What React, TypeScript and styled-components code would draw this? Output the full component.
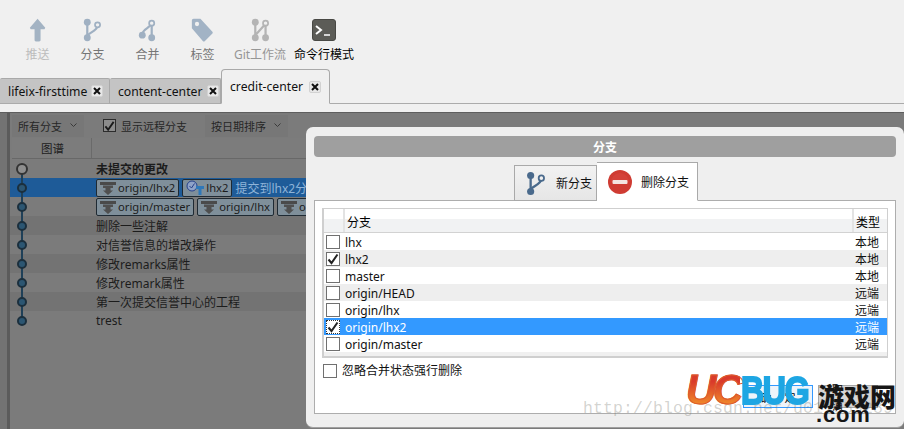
import React from "react";
import styled, { createGlobalStyle } from "styled-components";

const FONT = `"Noto Sans", "Noto Sans CJK SC", sans-serif`;

const GlobalStyle = createGlobalStyle`
  html, body {
    margin: 0;
    padding: 0;
    background: #f0f0f0;
    font-family: ${FONT};
    font-size: 12px;
    color: #000;
  }
`;

const Page = styled.div`
  position: relative;
  width: 904px;
  height: 429px;
  overflow: hidden;
  display: flex;
  flex-direction: column;
`;

const Toolbar = styled.div`
  height: 69px;
  flex: none;
  display: flex;
  padding-left: 10px;
`;

const ToolItem = styled.div<{ $width: number; $color: string }>`
  width: ${(p) => p.$width}px;
  display: flex;
  flex-direction: column;
  align-items: center;
  padding-top: 18px;
  color: ${(p) => p.$color};
  line-height: 16px;
  white-space: nowrap;
  svg {
    width: auto;
    height: 24px;
    margin-bottom: 5px;
  }
`;

const TabBar = styled.div`
  height: 35px;
  flex: none;
  display: flex;
  align-items: flex-end;
  border-bottom: 1px solid #ababab;
  box-sizing: border-box;
`;

const DocTab = styled.div<{ $active?: boolean; $width: number; $right: number }>`
  width: ${(p) => p.$width}px;
  box-sizing: border-box;
  height: ${(p) => (p.$active ? 35 : 26)}px;
  margin-bottom: -1px;
  display: flex;
  align-items: center;
  justify-content: space-between;
  padding: 0 ${(p) => p.$right}px 0 8px;
  background: ${(p) => (p.$active ? "#f0f0f0" : "#c4c4c4")};
  border: 1px solid #a9a9a9;
  border-bottom: ${(p) => (p.$active ? "1px solid #f0f0f0" : "1px solid #ababab")};
  border-left-width: ${(p) => (p.$active ? 1 : 0)}px;
  border-radius: ${(p) => (p.$active ? "4px 4px 0 0" : "2px 2px 0 0")};
  font-size: 12.2px;
  white-space: nowrap;
  color: #111;
`;

const CloseBox = styled.span`
  width: 12px;
  height: 12px;
  flex: none;
  display: flex;
  align-items: center;
  justify-content: center;
  background: #e8e8e8;
  border: 1px solid #d2d2d2;
  border-radius: 2px;
  box-sizing: border-box;
`;

const Workspace = styled.div`
  margin-top: 8px;
  flex: 1;
  display: flex;
  background: #7b7b7b;
  border-top: 1px solid #5e5e5e;
  min-height: 0;
`;

const Gutter = styled.div`
  width: 7px;
  flex: none;
  background: #737373;
  border-right: 3px solid #5b5b5b;
`;

const LogPane = styled.div`
  flex: 1;
  display: flex;
  flex-direction: column;
  color: #1c1c1c;
`;

const FilterBar = styled.div`
  height: 25px;
  flex: none;
  display: flex;
  align-items: center;
  color: #262626;
  padding-left: 2px;
`;

const FilterDrop = styled.div<{ $width: number }>`
  width: ${(p) => p.$width}px;
  height: 22px;
  box-sizing: border-box;
  padding: 0 7px 0 6px;
  display: flex;
  align-items: center;
  justify-content: space-between;
  background: #777;
  font-size: 11px;
  svg {
    margin-top: -1px;
  }
`;

const FilterCheck = styled.div`
  display: flex;
  align-items: center;
  gap: 5px;
  margin: 0 18px 0 19px;
  font-size: 11px;
`;

const DimBox = styled.span`
  width: 13px;
  height: 13px;
  box-sizing: border-box;
  border: 1px solid #2c2c2c;
  background: #8c8c8c;
  display: flex;
  align-items: center;
  justify-content: center;
`;

const GraphHeader = styled.div`
  height: 21px;
  flex: none;
  display: flex;
  align-items: center;
  background: #7c7c7c;
  border-bottom: 1px solid #686868;
  box-sizing: border-box;
  margin-left: 2px;
`;

const GraphTitle = styled.div`
  width: 80px;
  height: 100%;
  display: flex;
  align-items: center;
  justify-content: center;
  padding-left: 2px;
  box-sizing: border-box;
  border-right: 1px solid #6a6a6a;
  font-size: 11.5px;
`;

const CommitList = styled.div`
  position: relative;
  display: flex;
  flex-direction: column;
`;

const CommitRow = styled.div<{ $selected?: boolean; $odd?: boolean }>`
  height: 19px;
  display: flex;
  align-items: center;
  white-space: nowrap;
  overflow: hidden;
  background: ${(p) => (p.$selected ? "#1e5b98" : p.$odd ? "#737373" : "#7b7b7b")};
  font-size: 12px;
`;

const NodeCell = styled.div`
  width: 86px;
  height: 100%;
  flex: none;
  position: relative;
  display: flex;
  align-items: center;
  padding-left: 7px;
  box-sizing: border-box;
`;

const Rail = styled.span<{ $first?: boolean; $last?: boolean }>`
  position: absolute;
  left: 11px;
  width: 2px;
  background: #1f4058;
  top: ${(p) => (p.$first ? "50%" : 0)};
  bottom: ${(p) => (p.$last ? "50%" : 0)};
`;

const Node = styled.span<{ $head?: boolean }>`
  position: relative;
  width: ${(p) => (p.$head ? 12 : 10)}px;
  height: ${(p) => (p.$head ? 12 : 10)}px;
  margin-left: ${(p) => (p.$head ? -1 : 0)}px;
  border-radius: 50%;
  box-sizing: border-box;
  background: ${(p) => (p.$head ? "#8e8e8e" : "#2c5672")};
  border: ${(p) => (p.$head ? "2.5px solid #333" : "2px solid #1b2f3d")};
`;

const Subject = styled.span<{ $bold?: boolean; $light?: boolean }>`
  font-weight: ${(p) => (p.$bold ? 700 : 400)};
  color: ${(p) => (p.$light ? "#8fb4d8" : "#1c1c1c")};
`;

const RefTag = styled.span`
  height: 18px;
  box-sizing: border-box;
  display: inline-flex;
  align-items: center;
  gap: 2px;
  margin-right: 3px;
  padding: 0 3px;
  background: #7f8f9a;
  border: 1px solid #1f2a33;
  border-radius: 2px;
  color: #1c1c1c;
  font-size: 11.2px;
  flex: none;
`;

const Modal = styled.div`
  position: absolute;
  left: 306px;
  top: 127px;
  right: 0;
  bottom: 1px;
  box-sizing: border-box;
  background: #efefef;
  border-radius: 7px;
  border-bottom: 1px solid #a0a0a0;
  padding: 9px 8px 13px 8px;
  display: flex;
  flex-direction: column;
`;

const ModalTitle = styled.div`
  height: 21px;
  flex: none;
  background: #9f9f9f;
  border-radius: 4px;
  color: #fff;
  font-weight: 700;
  font-size: 12px;
  display: flex;
  align-items: center;
  justify-content: center;
`;

const ModalTabs = styled.div`
  height: 38px;
  margin-top: 6px;
  margin-bottom: -1px;
  flex: none;
  display: flex;
  justify-content: center;
  align-items: flex-end;
  position: relative;
  z-index: 1;
  padding-left: 2px;
`;

const ModalTab = styled.div<{ $active?: boolean; $width: number }>`
  width: ${(p) => p.$width}px;
  height: ${(p) => (p.$active ? 39 : 36)}px;
  box-sizing: border-box;
  display: flex;
  align-items: center;
  gap: ${(p) => (p.$active ? 9 : 10)}px;
  padding-left: 11px;
  border: 1px solid #a9a9a9;
  border-left-width: ${(p) => (p.$active ? 0 : 1)}px;
  border-bottom: 1px solid ${(p) => (p.$active ? "#fff" : "#a9a9a9")};
  background: ${(p) => (p.$active ? "#fff" : "linear-gradient(#f2f2f2, #e6e6e6)")};
  color: #111;
`;

const Panel = styled.div`
  flex: 1;
  background: #fff;
  border: 1px solid #adadad;
  padding: 7px 7px 0 7px;
  display: flex;
  flex-direction: column;
  position: relative;
`;

const BranchTable = styled.div`
  border: 1px solid #cfcfcf;
  border-width: 1px 1px 2px 2px;
  background: #f0f0f0;
  padding-bottom: 4px;
`;

const TableHead = styled.div`
  display: grid;
  grid-template-columns: 19px 1fr 35px;
  height: 24px;
  background: linear-gradient(#fff 42%, #f1f2f3 42%);
  border-bottom: 1px solid #d2d2d2;
  box-sizing: border-box;
`;

const HeadCell = styled.div<{ $divider?: boolean }>`
  display: flex;
  align-items: center;
  padding-left: 2px;
  padding-top: 3px;
  border-left: ${(p) => (p.$divider ? "2px solid #e3e3e3" : "none")};
  font-size: 12px;
`;

const BranchRow = styled.div<{ $alt?: boolean; $selected?: boolean }>`
  display: grid;
  grid-template-columns: 20px 1fr 34px;
  height: 17px;
  align-items: center;
  background: ${(p) => (p.$selected ? "#3399ff" : p.$alt ? "#eeeeee" : "#ffffff")};
  color: ${(p) => (p.$selected ? "#ffffff" : "#111")};
  font-size: 12px;
`;

const TypeCell = styled.span`
  padding-left: 2px;
`;

const NameCell = styled.span`
  padding-left: 1px;
`;

const Check = styled.span<{ $focus?: boolean }>`
  width: 14px;
  height: 14px;
  box-sizing: border-box;
  margin-left: 2px;
  border: 1px solid ${(p) => (p.$focus ? "#fff" : "#707070")};
  outline: ${(p) => (p.$focus ? "1px dotted #333" : "none")};
  outline-offset: -1px;
  background: #fff;
  display: flex;
  align-items: center;
  justify-content: center;
`;

const ForceRow = styled.div`
  display: flex;
  align-items: center;
  gap: 5px;
  margin: 6px 0 0 -1px;
  line-height: 14px;
  color: #111;
`;

const ButtonRow = styled.div`
  display: flex;
  justify-content: flex-end;
  gap: 5px;
  margin: 7px 10px 0 0;
`;

const DialogButton = styled.div<{ $primary?: boolean; $width: number }>`
  width: ${(p) => p.$width}px;
  height: 23px;
  box-sizing: border-box;
  display: flex;
  align-items: center;
  justify-content: center;
  letter-spacing: 13px;
  padding-left: 13px;
  background: ${(p) => (p.$primary ? "#eef4fa" : "#d6d6d6")};
  border: 1px solid ${(p) => (p.$primary ? "#3399ff" : "#a8a8a8")};
  font-size: 11px;
`;

const Watermark = styled.div`
  position: absolute;
  left: 583px;
  top: 399px;
  font-family: "Liberation Mono", monospace;
  font-size: 16.5px;
  letter-spacing: 0.1px;
  color: rgba(120, 120, 110, 0.32);
  white-space: nowrap;
`;

const LogoBox = styled.div`
  position: absolute;
  left: 687px;
  top: 370px;
  width: 215px;
  height: 55px;
`;

const LogoUC = styled.span`
  position: absolute;
  left: -1px;
  top: -1px;
  font-family: "Liberation Sans", sans-serif;
  font-size: 42px;
  line-height: 42px;
  font-weight: 700;
  font-style: italic;
  letter-spacing: -3.5px;
  background: linear-gradient(#d93a2b 30%, #f08a2a 85%);
  -webkit-background-clip: text;
  background-clip: text;
  color: transparent;
  -webkit-text-stroke: 1px #dd5a2a;
`;

const LogoBug = styled.span`
  position: absolute;
  left: 54px;
  top: 1px;
  font-family: "Liberation Sans", sans-serif;
  font-size: 39px;
  line-height: 40px;
  font-weight: 700;
  letter-spacing: -1.5px;
  color: #1ea6e3;
  -webkit-text-stroke: 2px #1ea6e3;
  transform: scaleX(0.82);
  transform-origin: left center;
`;

const LogoCn = styled.span`
  position: absolute;
  left: 131px;
  top: 11px;
  font-family: "Noto Sans CJK SC", sans-serif;
  font-size: 26px;
  line-height: 30px;
  font-weight: 900;
  color: #161616;
`;

const LogoCom = styled.span`
  position: absolute;
  left: 129px;
  top: 33px;
  font-family: "Liberation Sans", sans-serif;
  font-size: 22px;
  line-height: 24px;
  font-weight: 700;
  letter-spacing: 0.8px;
  color: #161616;
`;

const BranchIcon = ({ c = "#9fb0c2", w = 22, h = 28 }: { c?: string; w?: number; h?: number }) => (
  <svg width={w} height={h} viewBox="0 0 22 28">
    <path d="M5 5V22" stroke={c} strokeWidth="2.6" fill="none" />
    <path d="M5 21C5 18 17 15 17 9" stroke={c} strokeWidth="2.6" fill="none" />
    <circle cx="5" cy="5" r="4" fill={c} />
    <circle cx="5" cy="23" r="4" fill={c} />
    <circle cx="17" cy="8" r="3" fill="#f0f0f0" stroke={c} strokeWidth="2" />
  </svg>
);

const icons = {
  push: (
    <svg width="20" height="28" viewBox="0 0 20 28">
      <path d="M10 1L19 11.5L18 13H13.5V26C13.5 27 12.5 27.5 10 27.5C7.5 27.5 6.5 27 6.5 26V13H2L1 11.5Z" fill="#a3b3c3" />
    </svg>
  ),
  branch: <BranchIcon />,
  merge: (
    <svg width="22" height="28" viewBox="0 0 22 28">
      <path d="M16 5V22" stroke="#9fb0c2" strokeWidth="2.6" fill="none" />
      <path d="M5 19C5 13 15 11 15 7" stroke="#9fb0c2" strokeWidth="2.6" fill="none" />
      <circle cx="5" cy="20" r="4" fill="#9fb0c2" />
      <circle cx="16" cy="23" r="4" fill="#9fb0c2" />
      <circle cx="16" cy="6" r="3" fill="#f0f0f0" stroke="#9fb0c2" strokeWidth="2" />
    </svg>
  ),
  tag: (
    <svg width="26" height="28" viewBox="0 0 26 28">
      <path d="M1 3C1 2 2 1 3 1H11L25 16C25.500 16.600 25.500 17.500 25 18L16 27C15.500 27.500 14.500 27.500 14 27L1 12Z" fill="#a2b3c5" />
      <circle cx="7" cy="7" r="2.500" fill="#f0f0f0" />
    </svg>
  ),
  flow: (
    <svg width="22" height="28" viewBox="0 0 22 28">
      <path d="M5 5V22M17 8V22M5 20L16 8" stroke="#b4b4b4" strokeWidth="2.6" fill="none" />
      <circle cx="5" cy="5" r="4" fill="#b4b4b4" />
      <circle cx="5" cy="23" r="4" fill="#b4b4b4" />
      <circle cx="17" cy="23" r="4" fill="#b4b4b4" />
      <circle cx="17" cy="6" r="3" fill="#f0f0f0" stroke="#b4b4b4" strokeWidth="2" />
    </svg>
  ),
  terminal: (
    <svg width="24" height="24" viewBox="0 0 24 24">
      <rect x="0.500" y="1.500" width="23" height="21" rx="2.500" fill="#5c5c57" stroke="#484844" />
      <path d="M4 8L9 12L4 16" stroke="#fff" strokeWidth="2" fill="none" />
      <path d="M12 17H18" stroke="#fff" strokeWidth="1.500" fill="none" />
    </svg>
  ),
};

const CloseX = () => (
  <svg width="8" height="8" viewBox="0 0 8 8">
    <path d="M1 1L7 7M7 1L1 7" stroke="#111" strokeWidth="2" />
  </svg>
);

const Chevron = () => (
  <svg width="7" height="5" viewBox="0 0 7 5">
    <path d="M0.500 0.500L3.500 3.500L6.500 0.500" stroke="#3a3a3a" fill="none" />
  </svg>
);

const Tick = ({ c = "#222" }: { c?: string }) => (
  <svg width="12" height="12" viewBox="0 0 12 12">
    <path d="M1.500 6.500L4.500 10L10.500 1.500" stroke={c} strokeWidth="2" fill="none" />
  </svg>
);

const RemoteIcon = () => (
  <svg width="16" height="14" viewBox="0 0 16 14">
    <path d="M0 1H16V4H0Z" fill="#4a4a4a" />
    <path d="M3 4.500H13V7H10.500V9.500H13L8 14L3 9.500H5.500V7H3Z" fill="#4f4f4f" />
  </svg>
);

const LocalIcon = () => (
  <svg width="18" height="15" viewBox="0 0 18 15">
    <circle cx="6" cy="6" r="5" fill="#8fa3c8" stroke="#25408a" />
    <path d="M3.500 6L5.500 8L8.500 3.500" stroke="#25408a" fill="none" />
    <path d="M10 6H18V9H15.500V15H12.500V9H10Z" fill="#2f78b8" />
  </svg>
);

const StopIcon = () => (
  <svg width="24" height="24" viewBox="0 0 24 24">
    <circle cx="12" cy="12" r="12" fill="#cf3b32" />
    <path d="M3 12A9 9 0 0 1 21 12Z" fill="#d9483f" opacity="0.5" />
    <rect x="4.500" y="10" width="15" height="4" rx="1" fill="#f4e4e0" />
  </svg>
);

const tools = [
  { label: "推送", width: 55, color: "#bcbcbc", icon: icons.push },
  { label: "分支", width: 55, color: "#757575", icon: icons.branch },
  { label: "合并", width: 55, color: "#757575", icon: icons.merge },
  { label: "标签", width: 55, color: "#757575", icon: icons.tag },
  { label: "Git工作流", width: 60, color: "#969696", icon: icons.flow },
  { label: "命令行模式", width: 68, color: "#000", icon: icons.terminal },
];

const messages = [
  "删除一些注解",
  "对信誉信息的增改操作",
  "修改remarks属性",
  "修改remark属性",
  "第一次提交信誉中心的工程",
  "trest",
];

const branches = [
  { name: "lhx", type: "本地" },
  { name: "lhx2", type: "本地", checked: true },
  { name: "master", type: "本地" },
  { name: "origin/HEAD", type: "远端" },
  { name: "origin/lhx", type: "远端" },
  { name: "origin/lhx2", type: "远端", checked: true, selected: true },
  { name: "origin/master", type: "远端" },
];

const App = () => {
  return (
    <Page>
      <GlobalStyle />
      <Toolbar>
        {tools.map((t) => (
          <ToolItem key={t.label} $width={t.width} $color={t.color}>
            {t.icon}
            {t.label}
          </ToolItem>
        ))}
      </Toolbar>
      <TabBar>
        <DocTab $width={110} $right={6}>
          lifeix-firsttime
          <CloseBox>
            <CloseX />
          </CloseBox>
        </DocTab>
        <DocTab $width={111} $right={1}>
          content-center
          <CloseBox>
            <CloseX />
          </CloseBox>
        </DocTab>
        <DocTab $active $width={109} $right={8}>
          credit-center
          <CloseBox>
            <CloseX />
          </CloseBox>
        </DocTab>
      </TabBar>
      <Workspace>
        <Gutter />
        <LogPane>
          <FilterBar>
            <FilterDrop $width={72}>
              所有分支
              <Chevron />
            </FilterDrop>
            <FilterCheck>
              <DimBox>
                <Tick c="#1a1a1a" />
              </DimBox>
              显示远程分支
            </FilterCheck>
            <FilterDrop $width={83}>
              按日期排序
              <Chevron />
            </FilterDrop>
          </FilterBar>
          <GraphHeader>
            <GraphTitle>图谱</GraphTitle>
          </GraphHeader>
          <CommitList>
            <CommitRow>
              <NodeCell>
                <Rail $first />
                <Node $head />
              </NodeCell>
              <Subject $bold>未提交的更改</Subject>
            </CommitRow>
            <CommitRow $selected>
              <NodeCell>
                <Rail />
                <Node />
              </NodeCell>
              <RefTag>
                <RemoteIcon />
                origin/lhx2
              </RefTag>
              <RefTag>
                <LocalIcon />
                lhx2
              </RefTag>
              <Subject $light>提交到lhx2分支</Subject>
            </CommitRow>
            <CommitRow>
              <NodeCell>
                <Rail />
                <Node />
              </NodeCell>
              <RefTag>
                <RemoteIcon />
                origin/master
              </RefTag>
              <RefTag>
                <RemoteIcon />
                origin/lhx
              </RefTag>
              <RefTag>
                <RemoteIcon />
                origin/HEAD
              </RefTag>
            </CommitRow>
            {messages.map((m, i) => (
              <CommitRow key={m} $odd={i % 2 === 0}>
                <NodeCell>
                  <Rail $last={i === messages.length - 1} />
                  <Node />
                </NodeCell>
                <Subject>{m}</Subject>
              </CommitRow>
            ))}
          </CommitList>
        </LogPane>
      </Workspace>

      <Modal>
        <ModalTitle>分支</ModalTitle>
        <ModalTabs>
          <ModalTab $width={83}>
            <BranchIcon c="#4a6a8c" w={20} h={25} />
            新分支
          </ModalTab>
          <ModalTab $active $width={101}>
            <StopIcon />
            删除分支
          </ModalTab>
        </ModalTabs>
        <Panel>
          <BranchTable>
            <TableHead>
              <HeadCell />
              <HeadCell $divider>分支</HeadCell>
              <HeadCell $divider>类型</HeadCell>
            </TableHead>
            {branches.map((b, i) => (
              <BranchRow key={b.name} $alt={i % 2 === 1} $selected={b.selected}>
                <Check $focus={b.selected}>{b.checked && <Tick />}</Check>
                <NameCell>{b.name}</NameCell>
                <TypeCell>{b.type}</TypeCell>
              </BranchRow>
            ))}
          </BranchTable>
          <ForceRow>
            <Check />
            忽略合并状态强行删除
          </ForceRow>
          <ButtonRow>
            <DialogButton $primary $width={70}>
              确定
            </DialogButton>
            <DialogButton $width={60}>取消</DialogButton>
          </ButtonRow>
        </Panel>
      </Modal>

      <Watermark>http://blog.csdn.net/u011059289</Watermark>
      <LogoBox>
        <LogoUC>UC</LogoUC>
        <LogoBug>BUG</LogoBug>
        <LogoCn>游戏网</LogoCn>
        <LogoCom>.com</LogoCom>
      </LogoBox>
    </Page>
  );
};

export default App;
